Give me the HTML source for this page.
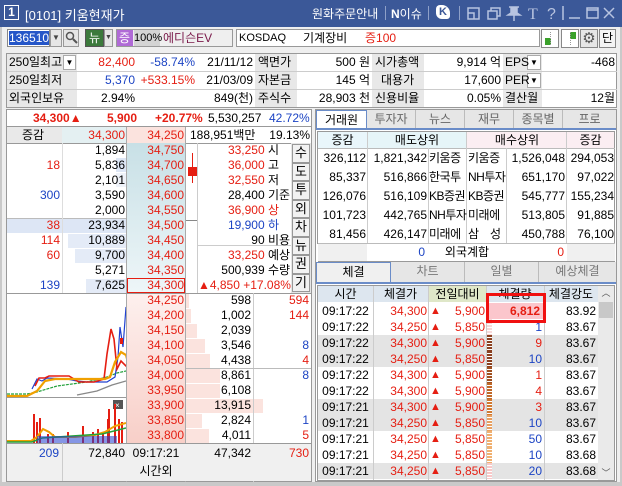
<!DOCTYPE html>
<html><head><meta charset="utf-8"><style>
*{margin:0;padding:0;box-sizing:border-box}
body{width:622px;height:486px;overflow:hidden;background:#c9c9c9;font-family:"Liberation Sans","Noto Sans CJK KR",sans-serif;font-size:11px;color:#000;position:relative}
.a{position:absolute;white-space:nowrap}
.r{text-align:right}.c{text-align:center}
.red{color:#e51e12}.blu{color:#1c44c4}
.k{font-family:"Liberation Sans","Noto Sans CJK KR",sans-serif;font-size:12px}
.it{font-size:12px}
</style></head><body>
<div class="a" style="left:0;top:0;width:622px;height:27px;background:#3b5898"></div>
<div class="a" style="left:4px;top:5px;width:15px;height:15px;border:1px solid #fff;color:#fff;font-size:12px;line-height:13px;text-align:center;font-weight:bold">1</div>
<div class="a k" style="left:25px;top:5px;color:#fff;font-size:13px">[0101] 키움현재가</div>
<div class="a k" style="left:312px;top:5px;color:#fff;font-size:12px">원화주문안내</div>
<div class="a" style="left:385px;top:6px;width:1px;height:14px;background:#8ea0c8"></div>
<div class="a k" style="left:391px;top:5px;color:#fff;font-size:12px"><b>N</b>이슈</div>
<div class="a" style="left:428px;top:6px;width:1px;height:14px;background:#8ea0c8"></div>
<div class="a" style="left:436px;top:5px;width:14px;height:14px;background:#fff;border-radius:4px 8px 3px 6px;color:#3b5898;font-weight:bold;font-size:11px;line-height:14px;text-align:center">K</div>
<div class="a" style="left:459px;top:6px;width:1px;height:14px;background:#8ea0c8"></div>
<svg class="a" style="left:465px;top:5px" width="150" height="16" viewBox="0 0 150 16" fill="none" stroke="#b8c4e0" stroke-width="1.5">
<rect x="3" y="3" width="11" height="11"/><path d="M3 8h6v6"/>
<rect x="23" y="6" width="9" height="8"/><path d="M26 6V3h9v8h-3"/>
<path d="M44 2h10M46 2v6l-3 2h12l-3-2V2M49 10v6" fill="#b8c4e0"/>
<text x="63" y="14" fill="#b8c4e0" stroke="none" font-size="16" font-family="Liberation Serif">T</text>
<text x="82" y="14" fill="#b8c4e0" stroke="none" font-size="16" font-family="Liberation Sans">?</text>
<path d="M98 1v14"/>
<path d="M104 13h11"/>
<rect x="122" y="3" width="11" height="10"/><path d="M122 5h11"/>
<path d="M139 3l10 10M149 3l-10 10"/>
</svg>
<div class="a" style="left:2px;top:27px;width:618px;height:455px;background:#efefef"></div>
<div class="a" style="left:7px;top:29px;width:43px;height:18px;background:#fff;border:1px solid #888"></div>
<div class="a" style="left:9px;top:31px;width:40px;height:14px;background:#2556c8;color:#fff;font-size:12px;line-height:14px">136510</div>
<div class="a" style="left:50px;top:29px;width:12px;height:18px;background:#e6e6e6;border:1px solid #999;font-size:8px;line-height:16px;text-align:center;color:#444">▼</div>
<div class="a" style="left:63px;top:29px;width:16px;height:18px;background:#e6e6e6;border:1px solid #999"></div>
<svg class="a" style="left:65px;top:31px" width="13" height="13"><circle cx="5" cy="5" r="3.5" stroke="#555" stroke-width="1.5" fill="none"/><path d="M8 8l4 4" stroke="#555" stroke-width="2"/></svg>
<div class="a k" style="left:85px;top:29px;width:19px;height:18px;background:#3c7a3c;color:#fff;border:1px solid #555;text-align:center;line-height:16px">뉴</div>
<div class="a" style="left:104px;top:29px;width:9px;height:18px;background:#e6e6e6;border:1px solid #999;font-size:7px;line-height:16px;text-align:center;color:#444">▼</div>
<div class="a k" style="left:116px;top:29px;width:17px;height:18px;background:#b06ad6;color:#fff;text-align:center;line-height:18px">증</div>
<div class="a" style="left:116px;top:29px;width:117px;height:18px;border:1px solid #999"></div>
<div class="a" style="left:134px;top:30px;width:26px;height:16px;background:#d4d4d4;font-size:11px;line-height:16px;text-align:center">100%</div>
<div class="a k" style="left:163px;top:30px;line-height:16px;color:#7a1a4a">에디슨EV</div>
<div class="a" style="left:236px;top:29px;width:304px;height:18px;background:#fff;border:1px solid #999"></div>
<div class="a" style="left:239px;top:30px;line-height:16px;font-size:11px">KOSDAQ</div>
<div class="a k" style="left:303px;top:30px;line-height:16px">기계장비</div>
<div class="a k red" style="left:365px;top:30px;line-height:16px">증100</div>
<div class="a" style="left:541px;top:29px;width:18px;height:19px;border:1px solid #888;background:#fff"><div class="a" style="left:3px;top:8px;width:6px;height:7px;background:#3aa12a"></div><div class="a" style="left:8px;top:2px;width:1px;height:13px;border-left:1px dotted #999"></div></div>
<div class="a" style="left:561px;top:29px;width:18px;height:19px;border:1px solid #888;background:#fff"><div class="a" style="left:8px;top:2px;width:6px;height:7px;background:#3aa12a"></div><div class="a" style="left:8px;top:2px;width:1px;height:13px;border-left:1px dotted #999"></div></div>
<div class="a" style="left:580px;top:29px;width:18px;height:19px;border:1px solid #888;background:#e6e6e6;font-size:15px;line-height:17px;text-align:center;color:#555">⚙</div>
<div class="a k" style="left:599px;top:29px;width:17px;height:19px;border:1px solid #888;background:#f4f4f4;text-align:center;line-height:17px">단</div>
<div class="a" style="left:6px;top:53px;width:611px;height:55px;background:#fff;border:1px solid #999"></div>
<div class="a" style="left:7px;top:54px;width:70px;height:53px;background:#e8e8e8"></div>
<div class="a" style="left:255px;top:54px;width:42px;height:53px;background:#e8e8e8"></div>
<div class="a" style="left:372px;top:54px;width:52px;height:53px;background:#e8e8e8"></div>
<div class="a" style="left:503px;top:54px;width:39px;height:53px;background:#e8e8e8"></div>
<div class="a" style="left:7px;top:71px;width:610px;height:1px;background:#ccc"></div>
<div class="a" style="left:7px;top:89px;width:610px;height:1px;background:#ccc"></div>
<div class="a" style="left:63px;top:55px;width:13px;height:15px;background:#fff;border:1px solid #aaa;font-size:8px;line-height:13px;text-align:center">▼</div>
<div class="a" style="left:527px;top:55px;width:14px;height:15px;background:#fff;border:1px solid #aaa;font-size:8px;line-height:13px;text-align:center">▼</div>
<div class="a" style="left:527px;top:73px;width:14px;height:15px;background:#fff;border:1px solid #aaa;font-size:8px;line-height:13px;text-align:center">▼</div>
<div class="a k" style="left:9px;top:54px;line-height:17px">250일최고</div>
<div class="a k" style="left:9px;top:72px;line-height:17px">250일최저</div>
<div class="a k" style="left:9px;top:90px;line-height:17px">외국인보유</div>
<div class="a r red it" style="left:77px;top:54px;width:58px;line-height:17px">82,400</div>
<div class="a r blu it" style="left:135px;top:54px;width:60px;line-height:17px">-58.74%</div>
<div class="a r it" style="left:195px;top:54px;width:58px;line-height:17px">21/11/12</div>
<div class="a r blu it" style="left:77px;top:72px;width:58px;line-height:17px">5,370</div>
<div class="a r red it" style="left:135px;top:72px;width:60px;line-height:17px">+533.15%</div>
<div class="a r it" style="left:195px;top:72px;width:58px;line-height:17px">21/03/09</div>
<div class="a r it" style="left:77px;top:90px;width:58px;line-height:17px">2.94%</div>
<div class="a r it" style="left:195px;top:90px;width:58px;line-height:17px">849(천)</div>
<div class="a k" style="left:258px;top:54px;line-height:17px">액면가</div>
<div class="a k" style="left:258px;top:72px;line-height:17px">자본금</div>
<div class="a k" style="left:258px;top:90px;line-height:17px">주식수</div>
<div class="a r k" style="left:300px;top:54px;width:70px;line-height:17px">500 원</div>
<div class="a r k" style="left:300px;top:72px;width:70px;line-height:17px">145 억</div>
<div class="a r k" style="left:300px;top:90px;width:70px;line-height:17px">28,903 천</div>
<div class="a k" style="left:375px;top:54px;line-height:17px">시가총액</div>
<div class="a k" style="left:381px;top:72px;line-height:17px">대용가</div>
<div class="a k" style="left:375px;top:90px;line-height:17px">신용비율</div>
<div class="a r k" style="left:424px;top:54px;width:77px;line-height:17px">9,914 억</div>
<div class="a r it" style="left:424px;top:72px;width:77px;line-height:17px">17,600</div>
<div class="a r it" style="left:424px;top:90px;width:77px;line-height:17px">0.05%</div>
<div class="a it" style="left:505px;top:54px;line-height:17px">EPS</div>
<div class="a it" style="left:505px;top:72px;line-height:17px">PER</div>
<div class="a k" style="left:505px;top:90px;line-height:17px">결산월</div>
<div class="a r it" style="left:545px;top:54px;width:70px;line-height:17px">-468</div>
<div class="a r k" style="left:545px;top:90px;width:70px;line-height:17px">12월</div>
<div class="a" style="left:6px;top:109px;width:306px;height:373px;background:#fff;border:1px solid #999"></div>
<div class="a" style="left:7px;top:110px;width:304px;height:16px;line-height:16px;font-size:12px"><span class="a red" style="left:26px;font-weight:bold">34,300▲</span><span class="a red" style="left:100px;font-weight:bold">5,900</span><span class="a red" style="left:148px;font-weight:bold">+20.77%</span><span class="a" style="left:201px;font-size:12px">5,530,257</span><span class="a blu" style="left:262px;font-size:12px">42.72%</span></div>
<div class="a" style="left:7px;top:126px;width:304px;height:1px;background:#999"></div>
<div class="a" style="left:7px;top:127px;width:55px;height:16px;background:#e9e9e9"></div>
<div class="a" style="left:62px;top:127px;width:64px;height:16px;background:#e4f0f2"></div>
<div class="a" style="left:127px;top:127px;width:58px;height:16px;background:#fbe3de"></div>
<div class="a k" style="left:22px;top:127px;line-height:16px">증감</div>
<div class="a r red it" style="left:62px;top:127px;width:63px;line-height:16px">34,300</div>
<div class="a r red it" style="left:127px;top:127px;width:57px;line-height:16px">34,250</div>
<div class="a k" style="left:190px;top:127px;line-height:16px">188,951백만</div>
<div class="a r it" style="left:250px;top:127px;width:60px;line-height:16px">19.13%</div>
<div class="a" style="left:7px;top:143px;width:304px;height:1px;background:#999"></div>
<div class="a" style="left:127px;top:143px;width:58px;height:150px;background:linear-gradient(#c8e0e6,#eef6f8)"></div>
<div class="a" style="left:127px;top:293px;width:58px;height:150px;background:linear-gradient(#fdf0ee,#f8cfc8)"></div>
<div class="a" style="left:116px;top:158px;width:10px;height:14px;background:#dde6f5"></div>
<div class="a" style="left:116px;top:173px;width:10px;height:14px;background:#eef2f9"></div>
<div class="a" style="left:7px;top:219px;width:119px;height:14px;background:#dde6f5"></div>
<div class="a" style="left:68px;top:234px;width:58px;height:14px;background:#e4ebf7"></div>
<div class="a" style="left:75px;top:249px;width:51px;height:14px;background:#e4ebf7"></div>
<div class="a" style="left:86px;top:279px;width:40px;height:14px;background:#e4ebf7"></div>
<div class="a" style="left:7px;top:218px;width:119px;height:1px;background:#bbb"></div>
<div class="a" style="left:62px;top:143px;width:1px;height:150px;background:#ddd"></div>
<div class="a" style="left:126px;top:127px;width:1px;height:355px;background:#aaa"></div>
<div class="a" style="left:185px;top:127px;width:1px;height:355px;background:#aaa"></div>
<div class="a" style="left:192px;top:153px;width:1px;height:30px;background:#e51e12"></div>
<div class="a" style="left:188px;top:167px;width:9px;height:9px;background:#e51e12"></div>
<div class="a" style="left:186px;top:220px;width:11px;height:1px;background:#888"></div>
<div class="a" style="left:197px;top:143px;width:1px;height:150px;background:#ccc"></div>
<div class="a" style="left:197px;top:245px;width:94px;height:1px;background:#ccc"></div>
<div class="a" style="left:198px;top:143px;width:92px;font-size:12px;line-height:15px">
<div class="r"><span class="red">33,250</span> <span class="k" style="display:inline-block;width:22px;text-align:left">시</span></div>
<div class="r"><span class="red">36,000</span> <span class="k" style="display:inline-block;width:22px;text-align:left">고</span></div>
<div class="r"><span class="red">32,550</span> <span class="k" style="display:inline-block;width:22px;text-align:left">저</span></div>
<div class="r"><span>28,400</span> <span class="k" style="display:inline-block;width:22px;text-align:left">기준</span></div>
<div class="r"><span class="red">36,900</span> <span class="k red" style="display:inline-block;width:22px;text-align:left">상</span></div>
<div class="r"><span class="blu">19,900</span> <span class="k blu" style="display:inline-block;width:22px;text-align:left">하</span></div>
<div class="r"><span>90</span> <span class="k" style="display:inline-block;width:22px;text-align:left">비용</span></div>
<div class="r"><span class="red">33,250</span> <span class="k" style="display:inline-block;width:22px;text-align:left">예상</span></div>
<div class="r"><span>500,939</span> <span class="k" style="display:inline-block;width:22px;text-align:left">수량</span></div>
<div class="r red">▲4,850 +17.08%</div>
</div>
<div class="a" style="left:291px;top:143px;width:20px;height:150px;background:#e6e6e6"></div>
<div class="a k" style="left:292px;top:144px;width:18px;font-size:13px;text-align:center">
<div style="height:18.5px;border:1px solid #999;background:#f2f2f2;line-height:16px">수</div>
<div style="height:18.5px;border:1px solid #999;background:#f2f2f2;line-height:16px">도</div>
<div style="height:18.5px;border:1px solid #999;background:#f2f2f2;line-height:16px">투</div>
<div style="height:18.5px;border:1px solid #999;background:#f2f2f2;line-height:16px">외</div>
<div style="height:18.5px;border:1px solid #999;background:#f2f2f2;line-height:16px">차</div>
<div style="height:18.5px;border:1px solid #999;background:#f2f2f2;line-height:16px">뉴</div>
<div style="height:18.5px;border:1px solid #999;background:#f2f2f2;line-height:16px">권</div>
<div style="height:18.5px;border:1px solid #999;background:#f2f2f2;line-height:16px">기</div>
</div>
<div class="a" style="left:7px;top:293px;width:304px;height:1px;background:#999"></div>
<div class="a" style="left:186px;top:294px;width:3px;height:14px;background:#fbe3de"></div>
<div class="a" style="left:186px;top:309px;width:5px;height:14px;background:#fbe3de"></div>
<div class="a" style="left:186px;top:324px;width:11px;height:14px;background:#fbe3de"></div>
<div class="a" style="left:186px;top:339px;width:19px;height:14px;background:#fbe3de"></div>
<div class="a" style="left:186px;top:354px;width:24px;height:14px;background:#fbe3de"></div>
<div class="a" style="left:186px;top:369px;width:34px;height:14px;background:#fbe3de"></div>
<div class="a" style="left:186px;top:384px;width:34px;height:14px;background:#fbe3de"></div>
<div class="a" style="left:186px;top:399px;width:77px;height:14px;background:#fbe3de"></div>
<div class="a" style="left:186px;top:414px;width:16px;height:14px;background:#fbe3de"></div>
<div class="a" style="left:186px;top:429px;width:23px;height:14px;background:#fbe3de"></div>
<div class="a" style="left:253px;top:293px;width:1px;height:189px;background:#ccc"></div>
<div class="a" style="left:186px;top:368px;width:125px;height:1px;background:#bbb"></div>
<svg class="a" style="left:7px;top:294px" width="119" height="149" viewBox="0 0 119 149">
<path d="M0 103.5h119" stroke="#999"/>
<path d="M0 100h20l10-2 20-6 30-4 20-5 10-4 9-2" stroke="#22a03a" fill="none" stroke-width="1.2" stroke-dasharray="3 1"/>
<path d="M70 101l20-4 15-6 14-4" stroke="#888" fill="none" stroke-width="1.3"/>
<path d="M25 95l5-10 5 2 5-3 20 1 10 2 10 1 20 0 8-5 3-20 2-30 3 20 3-40 3 20 3 50 5-10 4 15 5-10 5-5 4 15 5-2" stroke="#2040d0" fill="none" stroke-width="1.2"/>
<path d="M28 92l4-8 6 0 4-2 20 0 10 6 15 0 10-3 3-25 4-25 3 10 3 30 4-8 5 5 6-8 5 3" stroke="#e51e12" fill="none" stroke-width="1.6"/>
<path d="M0 102h20l10-5 8-10 10-2 30 0 20 0 5-2 5-15 6-10 5 3 4 15 6 8 5-3 5-2" stroke="#f0a000" fill="none" stroke-width="2.2"/>
<rect x="113" y="44" width="3" height="6" fill="#e51e12"/>
<rect x="0" y="104" width="119" height="45" fill="#fff"/>
<rect x="106" y="106" width="10" height="9" fill="#555"/><text x="108" y="114" fill="#fff" font-size="8">×</text>
<g fill="#e51e12"><rect x="26" y="120" width="2" height="29"/><rect x="29" y="128" width="2" height="21"/><rect x="32" y="124" width="2" height="25"/><rect x="40" y="140" width="2" height="9"/><rect x="45" y="140" width="2" height="9"/><rect x="60" y="138" width="2" height="11"/><rect x="75" y="132" width="2" height="17"/><rect x="85" y="138" width="2" height="11"/><rect x="90" y="135" width="2" height="14"/><rect x="95" y="140" width="2" height="9"/><rect x="100" y="125" width="2" height="24"/><rect x="107" y="110" width="2" height="39"/><rect x="111" y="125" width="2" height="24"/><rect x="114" y="128" width="2" height="21"/><rect x="101" y="115" width="2" height="34"/></g>
<path d="M0 147h24l6-4 6-8 6 3 6 5 20 0 20-2 10-3 10-6 11-3" stroke="#f0a000" stroke-width="2" fill="none"/>
<path d="M0 148h25l10-4 30-2 30-2 24-6" stroke="#22a03a" stroke-width="1.5" fill="none"/>
<rect x="30" y="142" width="80" height="7" fill="#2040d0" opacity=".55"/>
</svg>
<div class="a" style="left:7px;top:443px;width:304px;height:38px;background:#f0f0f0;border-top:1px solid #999"></div>
<div class="a r blu" style="left:7px;top:444px;width:52px;line-height:18px;font-size:12px">209</div>
<div class="a r" style="left:62px;top:444px;width:63px;line-height:18px;font-size:12px">72,840</div>
<div class="a c" style="left:127px;top:444px;width:58px;line-height:18px;font-size:12px">09:17:21</div>
<div class="a c k" style="left:127px;top:462px;width:58px;line-height:18px">시간외</div>
<div class="a r" style="left:186px;top:444px;width:65px;line-height:18px;font-size:12px">47,342</div>
<div class="a r red" style="left:254px;top:444px;width:55px;line-height:18px;font-size:12px">730</div>
<div class="a" style="left:62px;top:443px;width:1px;height:38px;background:#ccc"></div>
<div class="a" style="left:315px;top:109px;width:302px;height:373px;background:#fff;border:1px solid #999"></div>
<div class="a k" style="left:316px;top:110px;width:300px;height:18px;background:#e6e6e6;display:flex;color:#666">
<div style="width:51px;text-align:center;line-height:18px;background:#fff;color:#000;border:1px solid #6a8cc8;border-bottom:none">거래원</div>
<div style="width:49px;text-align:center;line-height:18px;border-right:1px solid #bbb">투자자</div>
<div style="width:49px;text-align:center;line-height:18px;border-right:1px solid #bbb">뉴스</div>
<div style="width:49px;text-align:center;line-height:18px;border-right:1px solid #bbb">재무</div>
<div style="width:49px;text-align:center;line-height:18px;border-right:1px solid #bbb">종목별</div>
<div style="width:53px;text-align:center;line-height:18px">프로</div>
</div>
<div class="a" style="left:316px;top:128px;width:300px;height:2px;background:#6a8cc8"></div>
<div class="a" style="left:317px;top:131px;width:298px;height:113px;border:1px solid #999"></div>
<div class="a" style="left:318px;top:132px;width:49px;height:16px;background:#e9f6fb"></div>
<div class="a" style="left:367px;top:132px;width:100px;height:16px;background:#e6f5f8"></div>
<div class="a" style="left:467px;top:132px;width:100px;height:16px;background:#fbeef2"></div>
<div class="a" style="left:567px;top:132px;width:47px;height:16px;background:#fbeef2"></div>
<div class="a k c" style="left:318px;top:132px;width:49px;line-height:16px">증감</div>
<div class="a k c" style="left:367px;top:132px;width:100px;line-height:16px">매도상위</div>
<div class="a k c" style="left:467px;top:132px;width:100px;line-height:16px">매수상위</div>
<div class="a k c" style="left:567px;top:132px;width:47px;line-height:16px">증감</div>
<div class="a" style="left:318px;top:148px;width:297px;height:1px;background:#bbb"></div>
<div class="a" style="left:367px;top:132px;width:1px;height:130px;background:#ccc"></div>
<div class="a" style="left:428px;top:148px;width:1px;height:95px;background:#ccc"></div>
<div class="a" style="left:466px;top:132px;width:1px;height:111px;background:#ccc"></div>
<div class="a" style="left:506px;top:148px;width:1px;height:114px;background:#ccc"></div>
<div class="a" style="left:566px;top:132px;width:1px;height:130px;background:#ccc"></div>
<div class="a" style="left:318px;top:243px;width:297px;height:19px;background:#fff;border-top:1px solid #bbb;border-bottom:1px solid #999"></div>
<div class="a" style="left:318px;top:244px;width:49px;height:17px;background:#f0f0f0"></div>
<div class="a" style="left:567px;top:244px;width:48px;height:17px;background:#f0f0f0"></div>
<div class="a r blu" style="left:367px;top:244px;width:58px;line-height:17px;font-size:12px">0</div>
<div class="a k c" style="left:428px;top:244px;width:78px;line-height:17px">외국계합</div>
<div class="a r red" style="left:506px;top:244px;width:58px;line-height:17px;font-size:12px">0</div>
<div class="a k" style="left:316px;top:262px;width:300px;height:20px;background:#e6e6e6;display:flex;color:#777">
<div style="width:75px;text-align:center;line-height:19px;background:#f0f0f0;color:#000;border:1px solid #6a8cc8;border-bottom:none">체결</div>
<div style="width:74px;text-align:center;line-height:19px;border-right:1px solid #bbb">차트</div>
<div style="width:74px;text-align:center;line-height:19px;border-right:1px solid #bbb">일별</div>
<div style="width:77px;text-align:center;line-height:19px">예상체결</div>
</div>
<div class="a" style="left:316px;top:282px;width:300px;height:2px;background:#6a8cc8"></div>
<div class="a" style="left:317px;top:285px;width:298px;height:196px;border:1px solid #999"></div>
<div class="a" style="left:318px;top:286px;width:280px;height:16px;background:#dde6ef"></div>
<div class="a" style="left:429px;top:286px;width:57px;height:16px;background:#dfe7c8"></div>
<div class="a k c" style="left:318px;top:286px;width:55px;line-height:16px">시간</div>
<div class="a k c" style="left:373px;top:286px;width:55px;line-height:16px">체결가</div>
<div class="a k c" style="left:429px;top:286px;width:57px;line-height:16px">전일대비</div>
<div class="a k c" style="left:486px;top:286px;width:58px;line-height:16px">체결량</div>
<div class="a k c" style="left:544px;top:286px;width:54px;line-height:16px">체결강도</div>
<div class="a" style="left:598px;top:286px;width:16px;height:194px;background:#eaeaea"></div>
<div class="a c" style="left:598px;top:286px;width:16px;line-height:14px;font-size:9px;color:#555">︿</div>
<div class="a" style="left:599px;top:302px;width:14px;height:16px;background:#c8c8c8"></div>
<div class="a c" style="left:598px;top:466px;width:16px;line-height:14px;font-size:9px;color:#555">﹀</div>
<script>
function D(h){document.body.insertAdjacentHTML('beforeend',h)}
var s=[["","1,894","34,750"],["18","5,836","34,700"],["","2,101","34,650"],["300b","3,590","34,600"],["","2,000","34,550"],["38","23,934","34,500"],["114","10,889","34,450"],["60","9,700","34,400"],["","5,271","34,350"],["139b","7,625","34,300"]];
s.forEach(function(r,i){var y=143+i*15,b=r[0].indexOf('b')>0,v=r[0].replace('b','');
D('<div class="a r '+(b?'blu':'red')+'" style="left:7px;top:'+y+'px;width:53px;line-height:15px;font-size:12px">'+v+'</div><div class="a r" style="left:62px;top:'+y+'px;width:63px;line-height:15px;font-size:12px">'+r[1]+'</div><div class="a r red" style="left:127px;top:'+y+'px;width:57px;line-height:15px;font-size:12px">'+r[2]+'</div>')});
D('<div class="a" style="left:127px;top:278px;width:58px;height:15px;border:1px solid #e51e12"></div>');
var bb=[["34,250","598","594r"],["34,200","1,002","144r"],["34,150","2,039",""],["34,100","3,546","8b"],["34,050","4,438","4r"],["34,000","8,861","8b"],["33,950","6,108",""],["33,900","13,915",""],["33,850","2,824","1b"],["33,800","4,011","5r"]];
bb.forEach(function(r,i){var y=293+i*15,c=r[2].slice(-1)=='b'?'blu':'red';
D('<div class="a r red" style="left:127px;top:'+y+'px;width:57px;line-height:15px;font-size:12px">'+r[0]+'</div><div class="a r" style="left:186px;top:'+y+'px;width:65px;line-height:15px;font-size:12px">'+r[1]+'</div><div class="a r '+c+'" style="left:254px;top:'+y+'px;width:55px;line-height:15px;font-size:12px">'+r[2].slice(0,-1)+'</div>')});
var k=[["326,112","1,821,342","키움증","키움증","1,526,048","294,053"],["85,337","516,866","한국투","NH투자","651,170","97,022"],["126,076","516,109","KB증권","KB증권","545,777","155,234"],["101,723","442,765","NH투자","미래에","513,805","91,885"],["81,456","426,147","미래에","삼　성","450,788","76,100"]];
k.forEach(function(r,i){var y=149+i*19;
D('<div class="a r" style="left:318px;top:'+y+'px;width:48px;line-height:19px;font-size:12px">'+r[0]+'</div><div class="a r" style="left:368px;top:'+y+'px;width:59px;line-height:19px;font-size:12px">'+r[1]+'</div><div class="a k" style="left:429px;top:'+y+'px;width:37px;line-height:19px;letter-spacing:-0.5px">'+r[2]+'</div><div class="a k" style="left:468px;top:'+y+'px;width:37px;line-height:19px;letter-spacing:-0.5px">'+r[3]+'</div><div class="a r" style="left:507px;top:'+y+'px;width:58px;line-height:19px;font-size:12px">'+r[4]+'</div><div class="a r" style="left:567px;top:'+y+'px;width:47px;line-height:19px;font-size:12px">'+r[5]+'</div>')});
var t=[["22","34,300","5,900","","83.92",0],["22","34,250","5,850","1b","83.67",0],["22","34,300","5,900","9r","83.67",1],["22","34,250","5,850","10b","83.67",1],["22","34,300","5,900","1r","83.67",0],["22","34,300","5,900","4r","83.67",0],["21","34,300","5,900","3r","83.67",1],["21","34,250","5,850","10b","83.67",1],["21","34,250","5,850","50b","83.67",0],["21","34,250","5,850","10b","83.68",0],["21","34,250","5,850","20b","83.68",1]];
var bc=["#fff","#f8d8d8","#8a4020","#8a4020","#a05020","#c06828","#d07830","#e8a060","#f0b070","#f0b070","#f8c8c8"];
t.forEach(function(r,i){var y=303+i*16,c=r[3].slice(-1)=='b'?'blu':'red';
D('<div class="a" style="left:318px;top:'+y+'px;width:280px;height:16px;background:'+(r[5]?'#e4e4e4':'#fff')+'"></div><div class="a" style="left:487px;top:'+y+'px;width:5px;height:16px;background:repeating-linear-gradient('+bc[i]+' 0 2px,#fff 2px 3px)"></div><div class="a c" style="left:318px;top:'+y+'px;width:55px;line-height:16px;font-size:12px">09:17:'+r[0]+'</div><div class="a r red" style="left:373px;top:'+y+'px;width:54px;line-height:16px;font-size:12px">'+r[1]+'</div><div class="a red" style="left:430px;top:'+y+'px;line-height:16px;font-size:11px">▲</div><div class="a r red" style="left:442px;top:'+y+'px;width:43px;line-height:16px;font-size:12px">'+r[2]+'</div><div class="a r '+c+'" style="left:492px;top:'+y+'px;width:50px;line-height:16px;font-size:12px">'+r[3].slice(0,-1)+'</div><div class="a r" style="left:544px;top:'+y+'px;width:52px;line-height:16px;font-size:12px">'+r[4]+'</div>')});
D('<div class="a" style="left:373px;top:286px;width:1px;height:194px;background:#ccc"></div><div class="a" style="left:428px;top:286px;width:1px;height:194px;background:#ccc"></div><div class="a" style="left:486px;top:286px;width:1px;height:194px;background:#ccc"></div><div class="a" style="left:544px;top:286px;width:1px;height:194px;background:#ccc"></div>');
D('<div class="a" style="left:488px;top:303px;width:55px;height:16px;background:#fbc6cc"></div><div class="a r red" style="left:488px;top:303px;width:52px;line-height:16px;font-size:12px;font-weight:bold">6,812</div><div class="a" style="left:486px;top:293px;width:60px;height:30px;border:3px solid #f01010"></div>');
</script>
</body></html>
